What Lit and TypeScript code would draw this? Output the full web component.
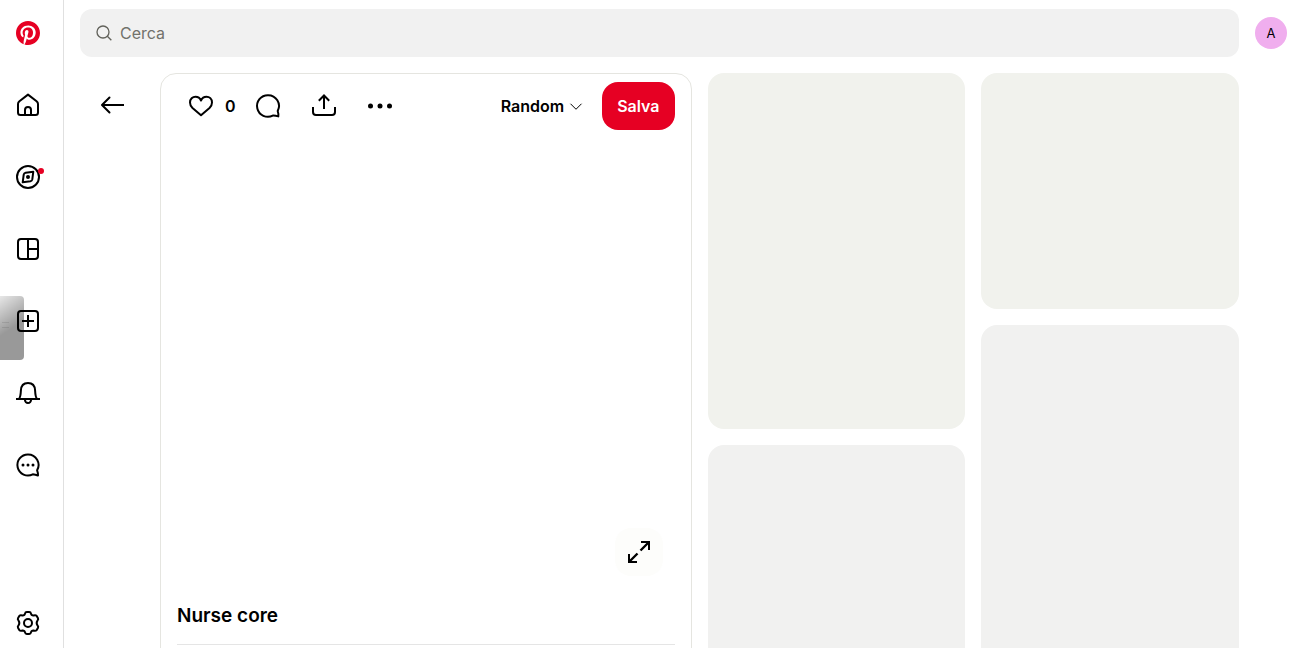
import { LitElement, html, css, svg } from "lit";
import { customElement, property } from "lit/decorators.js";

const stroke = (d: string) =>
  svg`<path d=${d} fill="none" stroke="currentColor" stroke-width="2" />`;

const icons: Record<string, unknown> = {
  logo: svg`<path fill="#e60023" d="M0 12c0 5.123 3.211 9.497 7.730 11.218-.11-.937-.227-2.482.025-3.566.217-.932 1.401-5.938 1.401-5.938s-.357-.715-.357-1.774c0-1.660.962-2.900 2.161-2.900 1.020 0 1.512.765 1.512 1.682 0 1.025-.653 2.557-.99 3.978-.281 1.189.597 2.159 1.769 2.159 2.123 0 3.756-2.239 3.756-5.471 0-2.861-2.056-4.860-4.991-4.860-3.398 0-5.393 2.549-5.393 5.184 0 1.027.395 2.127.889 2.726a.36.36 0 0 1 .083.343c-.091.378-.293 1.189-.332 1.355-.053.218-.173.265-.4.159-1.492-.694-2.424-2.875-2.424-4.627 0-3.769 2.737-7.229 7.892-7.229 4.144 0 7.365 2.953 7.365 6.899 0 4.117-2.595 7.431-6.199 7.431-1.211 0-2.348-.63-2.738-1.373 0 0-.599 2.282-.744 2.840-.282 1.084-1.064 2.456-1.549 3.235C9.584 23.815 10.770 24 12 24c6.627 0 12-5.373 12-12S18.627 0 12 0 0 5.373 0 12"/>`,
  home: svg`<path fill="none" stroke="currentColor" stroke-width="2" stroke-linejoin="round" d="M12 1.600 3.400 8.200Q2 9.300 2 11v8.500Q2 22 4.500 22h15q2.500 0 2.500-2.500V11q0-1.700-1.400-2.800zM9 22v-5a3 3 0 0 1 6 0v5"/>`,
  compass: svg`<circle cx="12" cy="12" r="11" fill="none" stroke="currentColor" stroke-width="2"/>
    <path fill="none" stroke="currentColor" stroke-width="2" stroke-linejoin="round" d="M9.600 7.700 17.300 6.700 16.300 14.400Q16 16 14.400 16.300L6.700 17.300 7.700 9.600Q8 8 9.600 7.700z"/>
    <circle cx="12" cy="12" r="2" fill="currentColor"/>`,
  boards: svg`<rect x="2" y="2" width="20" height="20" rx="3" fill="none" stroke="currentColor" stroke-width="2"/>${stroke("M12 2v20M12 12h10")}`,
  plus: svg`<rect x="2" y="2" width="20" height="20" rx="3" fill="none" stroke="currentColor" stroke-width="2"/>${stroke("M12 6v12M6 12h12")}`,
  bell: svg`${stroke("M0 18h24M3 18c1.500-2 1.700-4 1.900-8.500C5.100 4.500 8 2 12 2s6.900 2.500 7.100 7.500C19.300 14 19.500 16 21 18M8.900 18.500a3.100 3.600 0 0 0 6.200 0")}`,
  chat: svg`<path fill="none" stroke="currentColor" stroke-width="2" stroke-linejoin="round" d="M12 1.500a10.500 10.500 0 1 0 4.800 19.800q2.500.2 5.200 1.200.1-2.800-.9-5.200A10.500 10.500 0 0 0 12 1.500z"/>
    <circle cx="7" cy="12" r="1.500" fill="currentColor"/><circle cx="12" cy="12" r="1.500" fill="currentColor"/><circle cx="17" cy="12" r="1.500" fill="currentColor"/>`,
  gear: svg`<path fill="none" stroke="currentColor" stroke-width="2" stroke-linejoin="round" d="M9 2.600Q9.300 1 10.800 1h2.400Q14.700 1 15 2.600q.4 2 2.500 1.900 2.200-.7 3.200.4l1.300 2.300q.6 1.300-.5 2.300-1.700 2.500 0 5 1.100 1 .5 2.300l-1.300 2.300q-1 1.100-3.200.4-2.100-.1-2.500 1.900-.3 1.600-1.800 1.600h-2.400q-1.500 0-1.800-1.600-.4-2-2.500-1.900-2.200.7-3.200-.4L2 16.800q-.6-1.300.5-2.300 1.700-2.500 0-5Q1.400 8.500 2 7.200l1.300-2.300q1-1.100 3.200-.4Q8.600 4.600 9 2.600z"/>
    <circle cx="12" cy="12" r="4" fill="none" stroke="currentColor" stroke-width="2"/>`,
  search: svg`<circle cx="10.500" cy="10.500" r="9" fill="none" stroke="currentColor" stroke-width="2"/>${stroke("m17 17 6 6")}`,
  back: svg`<path fill="none" stroke="currentColor" stroke-width="2" stroke-linecap="round" stroke-linejoin="round" d="M9.500 4.500 2 12l7.500 7.500"/>${stroke("M2 12h22")}`,
  heart: svg`<path fill="none" stroke="currentColor" stroke-width="2" stroke-linejoin="round" d="M12 21.300 3.500 14C1.800 12.400 1 10.500 1 8.500 1 5 3.600 2.800 6.500 2.800 9 2.800 11 4.200 12 6.500c1-2.300 3-3.700 5.500-3.700C20.400 2.800 23 5 23 8.500c0 2-.8 3.900-2.500 5.500z"/>`,
  comment: svg`<path fill="none" stroke="currentColor" stroke-width="2" stroke-linejoin="round" d="M12 1.200a10.800 10.800 0 1 0 4.800 20.400q2.500-.1 5.500.8.300-2.800-.6-5.400A10.800 10.800 0 0 0 12 1.200z"/>`,
  share: svg`<path fill="none" stroke="currentColor" stroke-width="2" d="M12 15V2M6.800 6.700 12 1.500l5.200 5.200M1 13v5q0 3 3 3h16q3 0 3-3v-5"/>`,
  more: svg`<circle cx="2.500" cy="12" r="2.500" fill="currentColor"/><circle cx="12" cy="12" r="2.500" fill="currentColor"/><circle cx="21.500" cy="12" r="2.500" fill="currentColor"/>`,
  chevron: svg`<path fill="none" stroke="currentColor" stroke-width="2" d="m1 7.500 11 11 11-11"/>`,
  expand: svg`<path fill="none" stroke="currentColor" stroke-width="2" d="M14 2h8v8M10 22H2v-8"/><path fill="none" stroke="currentColor" stroke-width="2.400" d="m22 2-8.500 8.500M2 22l8.500-8.500"/>`,
};

@customElement("pin-icon")
export class PinIcon extends LitElement {
  @property() name = "";
  @property({ type: Number }) size = 24;
  static styles = css`
    :host { display: inline-flex; }
    svg { display: block; overflow: visible; }
  `;
  render() {
    return html`<svg viewBox="0 0 24 24" width=${this.size} height=${this.size} aria-hidden="true">${icons[this.name]}</svg>`;
  }
}

@customElement("side-nav")
export class SideNav extends LitElement {
  static styles = css`
    :host {
      position: relative;
      display: flex;
      flex: none;
      box-sizing: border-box;
      width: 64px;
      border-right: 1px solid #e0e0e0;
    }
    nav {
      display: flex;
      flex-direction: column;
      gap: 24px;
      padding: 9px 4px 1px;
    }
    a {
      position: relative;
      display: flex;
      align-items: center;
      justify-content: center;
      width: 48px;
      height: 48px;
      color: #000;
    }
    .last { margin-top: auto; }
    .dot {
      position: absolute;
      top: 15px;
      right: 8px;
      width: 6px;
      height: 6px;
      border-radius: 50%;
      background: #e60023;
    }
    .handle {
      position: absolute;
      top: 296px;
      left: 0;
      width: 24px;
      height: 64px;
      border-radius: 0 4px 4px 0;
      background: linear-gradient(145deg, #00000018 0%, #00000066 50%);
    }
    .handle::before {
      content: "";
      position: absolute;
      top: 26px;
      left: 2px;
      width: 7px;
      height: 4px;
      border: solid #00000018;
      border-width: 1px 0;
    }
  `;
  render() {
    const items = [
      ["logo", "Pinterest"], ["home", "Home"], ["compass", "Esplora"],
      ["boards", "Bacheche"], ["plus", "Crea"], ["bell", "Notifiche"],
      ["chat", "Messaggi"], ["gear", "Impostazioni"],
    ];
    return html`<nav>
        ${items.map(([icon, label]) => html`<a href="#" class=${icon === "gear" ? "last" : ""} aria-label=${label}>
          <pin-icon name=${icon}></pin-icon>
          ${icon === "compass" ? html`<span class="dot"></span>` : ""}
        </a>`)}
      </nav>
      <div class="handle"></div>`;
  }
}

@customElement("app-root")
export class AppRoot extends LitElement {
  static styles = css`
    :host {
      display: flex;
      height: 100vh;
      overflow: hidden;
      background: #fff;
      color: #000;
      font: 16px/24px Inter, "Liberation Sans", sans-serif;
    }
    button {
      display: flex;
      align-items: center;
      justify-content: center;
      height: 48px;
      padding: 0;
      border: 0;
      background: none;
      color: inherit;
      font: inherit;
      cursor: pointer;
    }
    .page { flex: 1; min-width: 0; }
    header {
      display: flex;
      align-items: center;
      gap: 16px;
      padding: 9px 11px 16px 16px;
    }
    .search {
      display: flex;
      flex: 1;
      align-items: center;
      gap: 8px;
      height: 48px;
      padding: 0 16px;
      box-sizing: border-box;
      border-radius: 12px;
      background: #f1f1f1;
      color: #62625b;
    }
    .search input {
      flex: 1;
      min-width: 0;
      padding: 0;
      border: 0;
      outline: 0;
      background: none;
      font: inherit;
    }
    .search input::placeholder { color: #72726b; opacity: 1; }
    .avatar {
      width: 32px;
      height: 32px;
      border-radius: 50%;
      background: #f0aeee;
      font-size: 13px;
    }
    main {
      display: flex;
      gap: 24px;
      padding: 0 59px 0 24px;
    }
    .back { width: 48px; margin-top: 8px; }
    .grid {
      display: grid;
      flex: 1;
      grid-template-columns: repeat(4, minmax(0, 1fr));
      gap: 16px;
      align-items: start;
    }
    .pin {
      grid-column: span 2;
      border: 1px solid #e5e5e0;
      border-radius: 16px;
      padding: 8px 16px 64px;
    }
    .bar { display: flex; align-items: center; justify-content: space-between; }
    .group { display: flex; align-items: center; gap: 8px; }
    .icon { width: 48px; }
    .like { display: flex; align-items: center; font-weight: 600; }
    .board { gap: 6px; padding: 0 12px; font-weight: 600; }
    .save {
      padding: 0 15px;
      border-radius: 16px;
      background: #e60023;
      color: #fff;
      font-weight: 600;
    }
    .media {
      display: flex;
      align-items: flex-end;
      justify-content: flex-end;
      height: 446px;
      padding-right: 12px;
    }
    .expand { width: 48px; border-radius: 16px; background: #fdfdfb; }
    h1 {
      margin: 0;
      padding: 26px 0 14px;
      border-bottom: 1px solid #e5e5e5;
      font-size: 19px;
      line-height: 28px;
      font-weight: 600;
    }
    .column { display: grid; gap: 16px; }
    .tile { border-radius: 16px; background: #f1f1f0; }
    .warm { background: #f1f2ed; }
    .tall { height: 356px; }
    .short { height: 236px; }
  `;
  render() {
    const iconButton = (name: string, label: string) =>
      html`<button class="icon" aria-label=${label}><pin-icon name=${name}></pin-icon></button>`;
    return html`<side-nav></side-nav>
      <div class="page">
        <header>
          <label class="search">
            <pin-icon name="search" size="16"></pin-icon>
            <input type="text" placeholder="Cerca" aria-label="Cerca" />
          </label>
          <button class="avatar" aria-label="Account">A</button>
        </header>
        <main>
          <button class="back" aria-label="Indietro"><pin-icon name="back"></pin-icon></button>
          <div class="grid">
            <article class="pin">
              <div class="bar">
                <div class="group">
                  <div class="like">${iconButton("heart", "Mi piace")}<span>0</span></div>
                  ${iconButton("comment", "Commenta")}
                  ${iconButton("share", "Condividi")}
                  ${iconButton("more", "Altro")}
                </div>
                <div class="group">
                  <button class="board">Random <pin-icon name="chevron" size="12"></pin-icon></button>
                  <button class="save">Salva</button>
                </div>
              </div>
              <div class="media">
                <button class="expand" aria-label="Espandi"><pin-icon name="expand"></pin-icon></button>
              </div>
              <h1>Nurse core</h1>
            </article>
            <div class="column">
              <div class="tile warm tall"></div>
              <div class="tile tall"></div>
            </div>
            <div class="column">
              <div class="tile warm short"></div>
              <div class="tile tall"></div>
            </div>
          </div>
        </main>
      </div>`;
  }
}
